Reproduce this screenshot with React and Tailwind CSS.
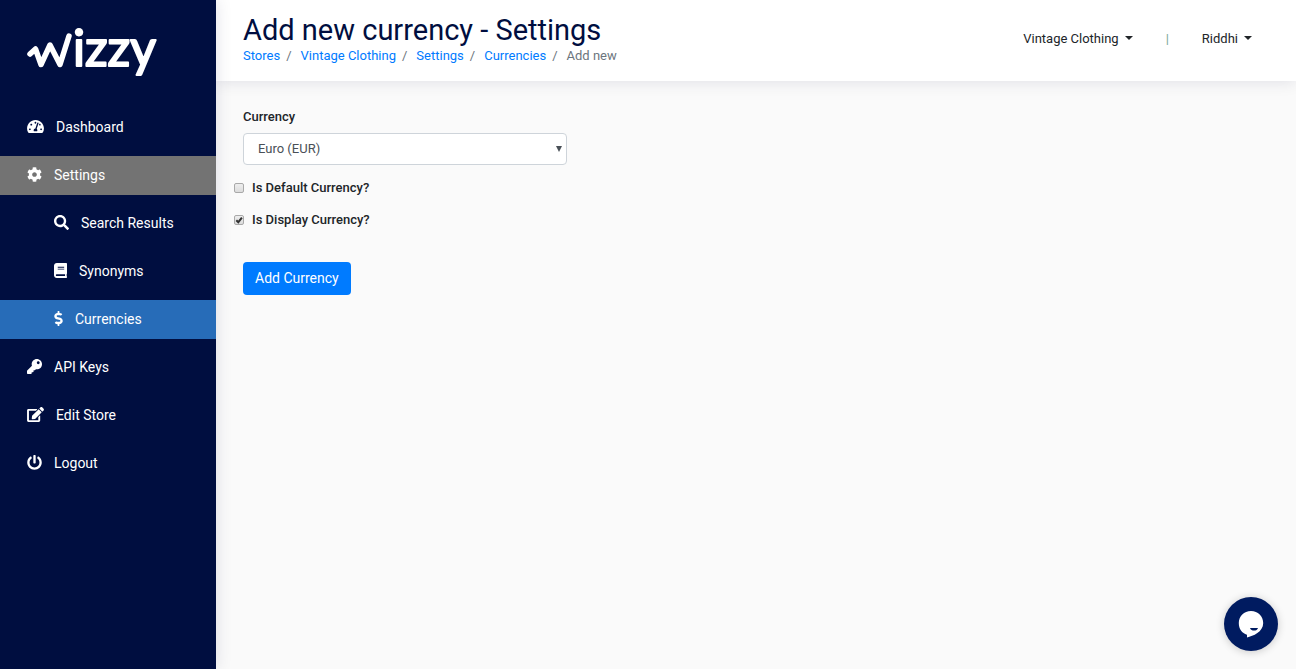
import { useState } from "react";
import {
  FaTachometerAlt,
  FaCog,
  FaSearch,
  FaBook,
  FaDollarSign,
  FaKey,
  FaEdit,
  FaPowerOff,
} from "react-icons/fa";

const menu = [
  { label: "Dashboard", icon: FaTachometerAlt, size: "w-[17px]" },
  { label: "Settings", icon: FaCog, size: "w-[15px]", open: true },
  { label: "Search Results", icon: FaSearch, size: "w-[15px]", sub: true },
  { label: "Synonyms", icon: FaBook, size: "w-[13px]", sub: true },
  { label: "Currencies", icon: FaDollarSign, size: "w-[9px]", sub: true, active: true },
  { label: "API Keys", icon: FaKey, size: "w-[15px]" },
  { label: "Edit Store", icon: FaEdit, size: "w-[17px]" },
  { label: "Logout", icon: FaPowerOff, size: "w-[15px]" },
];

const crumbs = ["Stores", "Vintage Clothing", "Settings", "Currencies"];

function Logo() {
  return (
    <svg viewBox="0 -12 144 72" className="h-[72px] w-36 overflow-visible" role="img" aria-label="Wizzy">
      <path
        d="M3 27 L8.500 22 L14 37.500 L23 18 L33 37.500 L42 9"
        fill="none"
        stroke="#fff"
        strokeWidth="5.5"
        strokeLinecap="round"
        strokeLinejoin="round"
      />
      <text
        x="46"
        y="39"
        fontSize="50"
        fill="#fff"
        stroke="#fff"
        strokeWidth="2"
        strokeLinejoin="round"
        className="font-['Lato'] font-normal"
      >
        izzy
      </text>
    </svg>
  );
}

function Sidebar() {
  return (
    <aside className="relative z-20 w-1/6 shrink-0 bg-[#000e40] pt-[15px] shadow-[0_0_16px_rgba(0,14,64,0.12)]">
      <a href="#" className="block px-[27px]">
        <Logo />
      </a>
      <nav className="mt-[21px] flex flex-col gap-[9px]">
        {menu.map(({ label, icon: Icon, size, sub, open, active }) => (
          <a
            key={label}
            href="#"
            className={`flex h-[39px] items-center gap-3 text-[14px] text-white ${sub ? "pl-[54px]" : "pl-[27px]"} ${open ? "bg-[#737373]" : ""} ${active ? "bg-[#276cb8]" : ""}`}
          >
            <Icon className={`mb-[2px] h-[15px] shrink-0 ${size}`} />
            {label}
          </a>
        ))}
      </nav>
    </aside>
  );
}

function Dropdown({ label }) {
  return (
    <button type="button" className="flex items-center gap-[6px]">
      {label}
      <svg viewBox="0 0 8 4" className="mb-[2px] h-1 w-2" fill="currentColor">
        <path d="M0 0h8L4 4z" />
      </svg>
    </button>
  );
}

function Header() {
  return (
    <header className="relative z-10 flex h-[81px] justify-between bg-white pl-[27px] pr-11 shadow-[0_0_16px_rgba(0,14,64,0.12)]">
      <div className="pt-3">
        <h1 className="text-[29px] leading-9 text-[#000e40]">
          Add new currency - Settings
        </h1>
        <ol className="flex text-[13px] leading-4 text-[#6c757d]">
          {crumbs.map((c) => (
            <li key={c} className="flex">
              <a href="#" className="text-[#007bff]">
                {c}
              </a>
              <span className="pl-[6px] pr-[9px]">/</span>
            </li>
          ))}
          <li>Add new</li>
        </ol>
      </div>
      <div className="flex h-[77px] items-center gap-[33px] text-[13px] text-[#212529]">
        <Dropdown label="Vintage Clothing" />
        <span className="text-[#78a598]">|</span>
        <Dropdown label="Riddhi" />
      </div>
    </header>
  );
}

function Checkbox({ id, label, checked, onChange }) {
  return (
    <div className="flex h-8 items-center gap-2">
      <span className="relative flex">
        <input
          id={id}
          type="checkbox"
          checked={checked}
          onChange={(e) => onChange(e.target.checked)}
          className="size-[10px] appearance-none rounded-xs border border-[#a9a9a9] bg-linear-to-b from-[#eeeeee] to-[#dcdcdc]"
        />
        {checked && (
          <svg viewBox="0 0 10 10" className="pointer-events-none absolute inset-0">
            <path d="M2.3 5.2l2 2L7.9 2.6" fill="none" stroke="#333" strokeWidth="2" />
          </svg>
        )}
      </span>
      <label htmlFor={id}>{label}</label>
    </div>
  );
}

function CurrencyForm() {
  const [isDefault, setIsDefault] = useState(false);
  const [isDisplay, setIsDisplay] = useState(true);

  return (
    <form
      onSubmit={(e) => e.preventDefault()}
      className="px-[27px] pt-[26px] text-[13px] font-medium text-[#212529]"
    >
      <label htmlFor="currency" className="block leading-5">
        Currency
      </label>
      <div className="relative mt-[6px] w-6/19 min-w-60">
        <select
          id="currency"
          className="h-8 w-full appearance-none rounded-[4px] border border-[#ced4da] bg-white pl-[14px] pr-6 font-normal text-[#495057]"
        >
          <option>Euro (EUR)</option>
          <option>US Dollar (USD)</option>
        </select>
        <svg
          viewBox="0 0 6 6"
          className="pointer-events-none absolute right-[5px] top-[13px] size-[6px]"
          fill="#495057"
        >
          <path d="M0 0h6L3 6z" />
        </svg>
      </div>
      <div className="-ml-[9px] mt-[7px]">
        <Checkbox
          id="is-default"
          label="Is Default Currency?"
          checked={isDefault}
          onChange={setIsDefault}
        />
        <Checkbox
          id="is-display"
          label="Is Display Currency?"
          checked={isDisplay}
          onChange={setIsDisplay}
        />
      </div>
      <button
        type="submit"
        className="mt-[26px] h-[33px] rounded-[4px] bg-[#007bff] px-3 text-[14px] font-normal text-white"
      >
        Add Currency
      </button>
    </form>
  );
}

function ChatButton() {
  return (
    <button
      type="button"
      aria-label="Open chat"
      className="fixed bottom-[18px] right-[18px] flex size-[54px] items-center justify-center rounded-full bg-[#001b60] shadow-[0_1px_8px_rgba(0,0,0,0.2)]"
    >
      <svg viewBox="0 0 26 28" className="h-7 w-[26px]">
        <path
          d="M13 1C6 1 .8 6 .8 13c0 6 3.200 10.200 8.200 11.800v2.700c6-1.500 16.200-5.500 16.200-14.500C25.200 6 20 1 13 1z"
          fill="#fff"
        />
        <path d="M12 18h8c-.6 3.200-6.800 3.600-8 0z" fill="#001b60" />
      </svg>
    </button>
  );
}

function App() {
  return (
    <div className="flex min-h-screen bg-[#fafafa] font-['Roboto',sans-serif]">
      <Sidebar />
      <main className="min-w-0 flex-1">
        <Header />
        <CurrencyForm />
      </main>
      <ChatButton />
    </div>
  );
}

export default App;
